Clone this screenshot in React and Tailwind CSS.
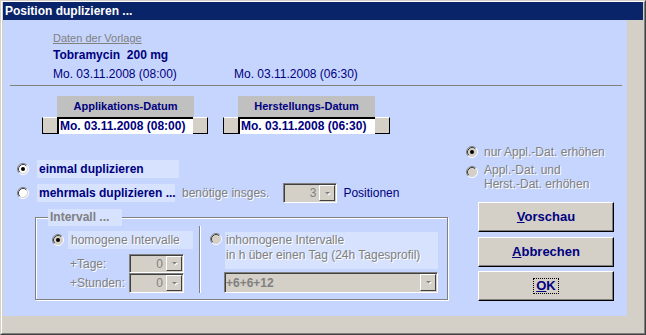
import React from 'react';

const Radio = ({ checked, disabled }) => (
  <svg width="12" height="12" viewBox="0 0 12 12" className="shrink-0">
    <circle cx="6" cy="6" r="5" fill={disabled ? '#d4d0c8' : '#ffffff'} />
    <path d="M2.11 9.89A5.5 5.5 0 0 1 9.89 2.11" fill="none" stroke="#808080" />
    <path d="M9.89 2.11A5.5 5.5 0 0 1 2.11 9.89" fill="none" stroke="#ffffff" />
    <path d="M2.82 9.18A4.5 4.5 0 0 1 9.18 2.82" fill="none" stroke="#404040" />
    <path d="M9.18 2.82A4.5 4.5 0 0 1 2.82 9.18" fill="none" stroke="#d4d0c8" />
    {checked && <circle cx="6" cy="6" r="2" fill="#000000" />}
  </svg>
);

const Combo = ({ className, children, textClass }) => (
  <div className={`flex bg-[#d4d0c8] border border-t-[#808080] border-l-[#808080] border-b-white border-r-white shadow-[inset_1px_1px_0_#404040] ${className}`}>
    <div className={`flex-1 text-[12px] text-[#808080] leading-none flex items-center ${textClass}`}>{children}</div>
    <div className="w-[16px] my-[1px] mr-[1px] ml-[2px] bg-[#d4d0c8] border border-t-white border-l-white border-b-[#404040] border-r-[#404040] flex items-center justify-center">
      <svg width="7" height="5" viewBox="0 0 7 5">
        <polygon points="1,1 6,1 3.5,3.5" fill="#ffffff" transform="translate(1,1)" />
        <polygon points="1,1 6,1 3.5,3.5" fill="#808080" />
      </svg>
    </div>
  </div>
);

const WinButton = ({ children }) => (
  <div className="w-[136px] h-[30px] bg-[#d4d0c8] border border-t-white border-l-white border-b-black border-r-black shadow-[inset_-1px_-1px_0_#808080] flex items-center justify-center text-[13px] font-bold text-[#000080]">
    {children}
  </div>
);

const DateField = ({ label, value, inputW }) => (
  <div className="flex flex-col">
    <div className="ml-[15px] w-[137px] h-[21px] bg-[#c0c0c0] text-center text-[11px] leading-[21px] font-bold text-[#000080]">
      {label}
    </div>
    <div className="flex h-[17px]">
      <div className="w-[15px] bg-[#d4d0c8] border-l border-b border-black border-t border-t-white" />
      <div className={`${inputW} bg-white border-t-2 border-l-2 border-t-[#000000] border-l-[#000000] text-[12px] font-bold text-[#000080] leading-[15px] pl-[1px] whitespace-nowrap`}>
        {value}
      </div>
      <div className="w-[15px] bg-[#d4d0c8] border-r border-b border-black border-t border-t-white" />
    </div>
  </div>
);

const dis = 'text-[#808080] [text-shadow:1px_1px_0_#ffffff]';

const App = () => {
  return (
    <div className="w-[646px] h-[335px] bg-[#d4d0c8] border border-[#d4d0c8] border-r-[#404040] border-b-[#404040] font-['Liberation_Sans',Arial,sans-serif] overflow-hidden">
      <div className="h-full border border-white border-r-[#808080] border-b-[#808080] pl-[1px] pr-[1px] flex flex-col">
        {/* Title bar */}
        <div className="h-[18px] bg-[#0a246a] text-white font-bold text-[12px] leading-[18px] pl-[2px] whitespace-nowrap">
          Position duplizieren ...
        </div>

        <div className="flex">
          <div className="w-[624px] h-[296px] bg-[#c6d5fd] flex flex-col">
            {/* Vorlage */}
            <div className="pl-[50px] pt-[11px] text-[#000080]">
              <div className="text-[11px] leading-[14px] text-[#808080] underline">Daten der Vorlage</div>
              <div className="mt-[3px] text-[12px] leading-[14px] font-bold whitespace-pre">Tobramycin  200 mg</div>
              <div className="mt-[5px] flex text-[12px] leading-[14px]">
                <span className="w-[181px]">Mo. 03.11.2008 (08:00)</span>
                <span>Mo. 03.11.2008 (06:30)</span>
              </div>
            </div>
            <div className="ml-[7px] mt-[4px] w-[612px] h-px bg-[#808080]" />

            {/* Dates */}
            <div className="mt-[10px] flex pl-[39px] gap-[15px]">
              <DateField label="Applikations-Datum" value="Mo. 03.11.2008 (08:00)" inputW="w-[136px]" />
              <DateField label="Herstellungs-Datum" value="Mo. 03.11.2008 (06:30)" inputW="w-[137px]" />
            </div>

            <div className="flex">
              {/* Left column */}
              <div className="w-[447px] flex flex-col">
                <div className="mt-[26px] flex items-center h-[18px]">
                  <div className="ml-[14px]"><Radio checked /></div>
                  <div className="ml-[8px] w-[142px] h-[18px] bg-[#d6e2fe] text-[12px] font-bold text-[#000080] leading-[18px] pl-[2px]">
                    einmal duplizieren
                  </div>
                </div>
                <div className="mt-[5px] flex items-center h-[20px]">
                  <div className="ml-[14px]"><Radio /></div>
                  <div className="ml-[8px] w-[138px] h-[18px] bg-[#d6e2fe] text-[12px] font-bold text-[#000080] leading-[18px] pl-[2px] whitespace-nowrap">
                    mehrmals duplizieren ...
                  </div>
                  <span className={`ml-[7px] text-[12px] ${dis}`}>benötige insges.</span>
                  <Combo className="ml-[14px] w-[54px] h-[20px]" textClass="justify-end pr-[1px]">3</Combo>
                  <span className="ml-[6px] text-[12px] text-[#000080]">Positionen</span>
                </div>

                <fieldset className="mt-[6px] ml-[32px] w-[413px] border border-[#808080] shadow-[inset_1px_1px_0_#ffffff,1px_1px_0_#ffffff]">
                  <legend className="ml-[12px] w-[74px] h-[17px] bg-[#d6e2fe] pl-[2px] text-[12px] font-bold leading-[17px] text-[#808080]">
                    Intervall ...
                  </legend>
                  <div className="flex pb-[6px]">
                    <div className="w-[163px] pl-[16px] pt-[5px] flex flex-col">
                      <div className="flex items-center h-[18px]">
                        <Radio checked disabled />
                        <div className={`ml-[4px] w-[125px] h-[18px] bg-[#d6e2fe] text-[12px] leading-[18px] pl-[3px] ${dis}`}>
                          homogene Intervalle
                        </div>
                      </div>
                      <div className="mt-[5px] flex items-center">
                        <span className={`ml-[18px] w-[59px] text-[12px] ${dis}`}>+Tage:</span>
                        <Combo className="w-[55px] h-[19px]" textClass="justify-end pr-[1px]">0</Combo>
                      </div>
                      <div className="flex items-center">
                        <span className={`ml-[18px] w-[59px] text-[12px] ${dis}`}>+Stunden:</span>
                        <Combo className="w-[55px] h-[20px]" textClass="justify-end pr-[1px]">0</Combo>
                      </div>
                    </div>
                    <div className="w-[2px] border-l border-[#808080] border-r border-r-white" />
                    <div className="pl-[9px] pt-[6px] flex flex-col">
                      <div className="flex items-start">
                        <div className="mt-[1px]"><Radio disabled /></div>
                        <div className={`ml-[3px] w-[213px] h-[37px] bg-[#d6e2fe] text-[12px] leading-[15px] pt-[1px] pl-[1px] ${dis}`}>
                          <div>inhomogene Intervalle</div>
                          <div>in h über einen Tag (24h Tagesprofil)</div>
                        </div>
                      </div>
                      <Combo className="mt-[3px] ml-[14px] w-[214px] h-[21px]" textClass="font-bold pl-[1px]">+6+6+12</Combo>
                    </div>
                  </div>
                </fieldset>
              </div>

              {/* Right column */}
              <div className="pl-[16px] flex flex-col">
                <div className="mt-[10px] flex items-center h-[16px]">
                  <Radio checked disabled />
                  <span className={`ml-[6px] text-[12px] leading-[16px] whitespace-nowrap ${dis}`}>nur Appl.-Dat. erhöhen</span>
                </div>
                <div className="mt-[3px] flex items-start">
                  <div className="mt-[3px]"><Radio disabled /></div>
                  <div className={`ml-[6px] text-[12px] leading-[14px] whitespace-nowrap ${dis}`}>
                    <div>Appl.-Dat. und</div>
                    <div>Herst.-Dat. erhöhen</div>
                  </div>
                </div>
                <div className="mt-[11px] ml-[12px] flex flex-col">
                  <WinButton><span><span className="underline">V</span>orschau</span></WinButton>
                  <div className="mt-[5px]">
                    <WinButton><span><span className="underline">A</span>bbrechen</span></WinButton>
                  </div>
                  <div className="mt-[4px]">
                    <WinButton>
                      <span className="border border-dotted border-black px-[2px] leading-[14px]">
                        <span className="underline">O</span>K
                      </span>
                    </WinButton>
                  </div>
                </div>
              </div>
            </div>
          </div>
        </div>
      </div>
    </div>
  );
};

export default App;
